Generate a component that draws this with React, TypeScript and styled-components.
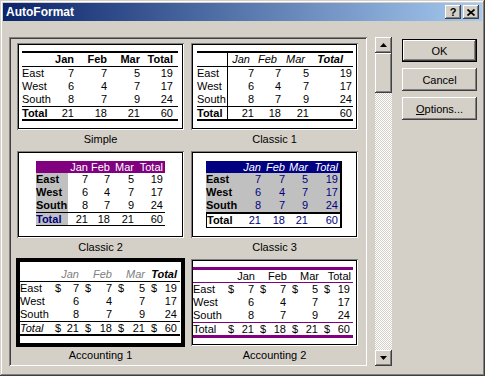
import styled, { createGlobalStyle, css } from "styled-components";

const FACE = "#d4d0c8";
const PURPLE = "#800080";
const NAVY = "#000080";
const SILVER = "#c0c0c0";

const GlobalStyle = createGlobalStyle`
  html, body {
    margin: 0;
    padding: 0;
    background: ${FACE};
  }
  body {
    font-family: "Liberation Sans", Arial, sans-serif;
    font-size: 11px;
    color: #000;
  }
`;

const raised = css`
  background: ${FACE};
  box-shadow: inset -1px -1px #404040, inset 1px 1px #fff,
    inset -2px -2px #808080, inset 2px 2px ${FACE};
`;

const Window = styled.div`
  width: 485px;
  height: 376px;
  box-sizing: border-box;
  padding: 3px;
  background: ${FACE};
  box-shadow: inset -1px -1px #404040, inset 1px 1px ${FACE},
    inset -2px -2px #808080, inset 2px 2px #fff;
  display: flex;
  flex-direction: column;
`;

const TitleBar = styled.div`
  height: 18px;
  display: flex;
  align-items: center;
  padding: 0 3px 0 3px;
  background: linear-gradient(to right, #0a246a, #a6caf0);
  color: #fff;
  font-weight: bold;
  font-size: 12px;
`;

const TitleButtons = styled.div`
  margin-left: auto;
  display: flex;
  gap: 2px;
`;

const CaptionButton = styled.div`
  width: 16px;
  height: 14px;
  ${raised};
  display: flex;
  align-items: center;
  justify-content: center;
  color: #000;
  font-weight: bold;
  font-size: 11px;
  line-height: 14px;
`;

const Body = styled.div`
  display: flex;
  padding: 16px 0 0 6px;
`;

const Gallery = styled.div`
  width: 358px;
  height: 329px;
  box-sizing: border-box;
  overflow: hidden;
  box-shadow: inset 1px 1px #808080, inset -1px -1px #fff,
    inset 2px 2px #404040, inset -2px -2px ${FACE};
  padding: 6px 0 0 8px;
  display: grid;
  grid-template-columns: repeat(2, 167px);
  column-gap: 7px;
  row-gap: 3px;
  align-content: start;
`;

const Cell = styled.div`
  display: flex;
  flex-direction: column;
`;

const Frame = styled.div<{ $pt: number; $pl: number; $selected?: boolean }>`
  width: 167px;
  height: 87px;
  box-sizing: border-box;
  background: #fff;
  overflow: hidden;
  padding: ${(p) => p.$pt}px 0 0 ${(p) => p.$pl}px;
  box-shadow: ${(p) =>
    p.$selected
      ? "0 0 0 1px #000, inset 0 0 0 3px #000"
      : "inset 1px 1px #808080, inset -1px -1px #fff, inset 2px 2px #000, inset -2px -2px #000"};
`;

const Caption = styled.div`
  height: 18px;
  line-height: 18px;
  text-align: center;
`;

const PTable = styled.div<{ $right?: string }>`
  width: max-content;
  font-size: 11px;
  border-right: ${(p) => p.$right ?? "none"};
`;

const Row = styled.div<{
  $cols: string;
  $h: number;
  $bg?: string;
  $top?: string;
  $bottom?: string;
  $edge?: boolean;
}>`
  display: grid;
  grid-template-columns: ${(p) => p.$cols};
  height: ${(p) => p.$h}px;
  line-height: ${(p) => p.$h}px;
  background: ${(p) => p.$bg ?? "transparent"};
  border-top: ${(p) => p.$top ?? "none"};
  border-bottom: ${(p) => p.$bottom ?? "none"};
  box-shadow: ${(p) => (p.$edge ? "inset 1px 0 0 #000" : "none")};
`;

const Td = styled.div<{
  $right?: boolean;
  $pr?: number;
  $pl?: number;
  $bold?: boolean;
  $italic?: boolean;
  $color?: string;
  $bg?: string;
  $sep?: boolean;
}>`
  box-sizing: border-box;
  white-space: nowrap;
  text-align: ${(p) => (p.$right ? "right" : "left")};
  padding: 0 ${(p) => p.$pr ?? 0}px 0 ${(p) => p.$pl ?? 0}px;
  font-weight: ${(p) => (p.$bold ? "bold" : "normal")};
  font-style: ${(p) => (p.$italic ? "italic" : "normal")};
  color: ${(p) => p.$color ?? "inherit"};
  background: ${(p) => p.$bg ?? "transparent"};
  border-right: ${(p) => (p.$sep ? "1px solid #000" : "none")};
`;

const Money = styled.div`
  display: flex;
  justify-content: space-between;
  padding: 0 3px;
  white-space: nowrap;
`;

const Side = styled.div`
  margin-left: 8px;
  width: 17px;
  height: 329px;
  display: flex;
  flex-direction: column;
`;

const ArrowButton = styled.div`
  height: 16px;
  ${raised};
  display: flex;
  align-items: center;
  justify-content: center;
`;

const Thumb = styled.div`
  height: 40px;
  ${raised};
`;

const Track = styled.div`
  flex: 1;
  background-image: repeating-conic-gradient(#fff 0 25%, ${FACE} 0 50%);
  background-size: 2px 2px;
`;

const Buttons = styled.div`
  margin: 2px 0 0 10px;
  display: flex;
  flex-direction: column;
  gap: 6px;
`;

const Button = styled.button<{ $default?: boolean }>`
  width: 75px;
  height: 23px;
  border: none;
  padding: 0;
  font-family: "Liberation Sans", Arial, sans-serif;
  font-size: 11px;
  color: #000;
  ${raised};
  ${(p) =>
    p.$default &&
    css`
      box-shadow: inset 0 0 0 1px #000, inset -2px -2px #404040,
        inset 2px 2px #fff, inset -3px -3px #808080;
    `}
`;

const DATA: [string, number, number, number, number][] = [
  ["East", 7, 7, 5, 19],
  ["West", 6, 4, 7, 17],
  ["South", 8, 7, 9, 24],
];
const TOTALS = [21, 18, 21, 60];
const MONTHS = ["Jan", "Feb", "Mar"];

function Simple() {
  const cols = "24px 33px 33px 33px 33px";
  return (
    <PTable>
      <Row $cols={cols} $h={13} $top="2px solid #000" $bottom="1px solid #000">
        <Td />
        {[...MONTHS, "Total"].map((m) => (
          <Td key={m} $right $pr={5} $bold>
            {m}
          </Td>
        ))}
      </Row>
      {DATA.map(([label, ...nums]) => (
        <Row key={label} $cols={cols} $h={13}>
          <Td>{label}</Td>
          {nums.map((n, i) => (
            <Td key={i} $right $pr={5}>
              {n}
            </Td>
          ))}
        </Row>
      ))}
      <Row $cols={cols} $h={12} $top="1px solid #000" $bottom="2px solid #000">
        <Td $bold>Total</Td>
        {TOTALS.map((n, i) => (
          <Td key={i} $right $pr={5}>
            {n}
          </Td>
        ))}
      </Row>
    </PTable>
  );
}

function Classic1() {
  const cols = "31px 27px 27px 28px 43px";
  return (
    <PTable>
      <Row $cols={cols} $h={13} $top="2px solid #000" $bottom="1px solid #000">
        <Td $sep />
        {MONTHS.map((m) => (
          <Td key={m} $right $pr={5} $italic>
            {m}
          </Td>
        ))}
        <Td $right $pr={10} $italic $bold>
          Total
        </Td>
      </Row>
      {DATA.map(([label, ...nums]) => (
        <Row key={label} $cols={cols} $h={13}>
          <Td $sep>{label}</Td>
          {nums.map((n, i) => (
            <Td key={i} $right $pr={1}>
              {n}
            </Td>
          ))}
        </Row>
      ))}
      <Row $cols={cols} $h={12} $top="1px solid #000" $bottom="2px solid #000">
        <Td $sep $bold>
          Total
        </Td>
        {TOTALS.map((n, i) => (
          <Td key={i} $right $pr={1}>
            {n}
          </Td>
        ))}
      </Row>
    </PTable>
  );
}

function Classic2() {
  const cols = "32px 22px 22px 24px 29px";
  return (
    <PTable>
      <Row $cols={cols} $h={12} $bg={PURPLE}>
        <Td />
        {[...MONTHS, "Total"].map((m) => (
          <Td key={m} $right $pr={2} $color="#fff">
            {m}
          </Td>
        ))}
      </Row>
      {DATA.map(([label, ...nums]) => (
        <Row key={label} $cols={cols} $h={13}>
          <Td $bold $bg={SILVER}>
            {label}
          </Td>
          {nums.map((n, i) => (
            <Td key={i} $right $pr={2}>
              {n}
            </Td>
          ))}
        </Row>
      ))}
      <Row $cols={cols} $h={12} $top="1px solid #000" $bottom="1px solid #000">
        <Td $bold $bg={SILVER} $color={NAVY}>
          Total
        </Td>
        {TOTALS.map((n, i) => (
          <Td key={i} $right $pr={2}>
            {n}
          </Td>
        ))}
      </Row>
    </PTable>
  );
}

function Classic3() {
  const cols = "34px 23px 24px 23px 30px";
  return (
    <PTable $right="2px solid #000">
      <Row $cols={cols} $h={12} $bg={NAVY}>
        <Td />
        {[...MONTHS, "Total"].map((m) => (
          <Td key={m} $right $pr={2} $italic $color="#fff">
            {m}
          </Td>
        ))}
      </Row>
      {DATA.map(([label, ...nums]) => (
        <Row key={label} $cols={cols} $h={13} $bg={SILVER}>
          <Td $bold>{label}</Td>
          {nums.map((n, i) => (
            <Td key={i} $right $pr={2} $color={NAVY}>
              {n}
            </Td>
          ))}
        </Row>
      ))}
      <Row
        $cols={cols}
        $h={13}
        $bg="#fff"
        $top="2px solid #000"
        $bottom="1px solid #000"
        $edge
      >
        <Td $bold $pl={1}>
          Total
        </Td>
        {TOTALS.map((n, i) => (
          <Td key={i} $right $pr={2} $color={NAVY}>
            {n}
          </Td>
        ))}
      </Row>
    </PTable>
  );
}

function Accounting1() {
  const cols = "32px 30px 33px 33px 32px";
  return (
    <PTable>
      <Row $cols={cols} $h={13} $bottom="1px solid #000">
        <Td />
        {MONTHS.map((m) => (
          <Td key={m} $right $pr={3} $italic $color="#808080">
            {m}
          </Td>
        ))}
        <Td $right $pr={3} $italic $bold>
          Total
        </Td>
      </Row>
      {DATA.map(([label, ...nums], r) => (
        <Row key={label} $cols={cols} $h={13}>
          <Td>{label}</Td>
          {nums.map((n, i) =>
            r === 0 ? (
              <Money key={i}>
                <span>$</span>
                <span>{n}</span>
              </Money>
            ) : (
              <Td key={i} $right $pr={3}>
                {n}
              </Td>
            )
          )}
        </Row>
      ))}
      <Row $cols={cols} $h={12} $top="1px solid #000" $bottom="2px solid #000">
        <Td $italic>Total</Td>
        {TOTALS.map((n, i) => (
          <Money key={i}>
            <span>$</span>
            <span>{n}</span>
          </Money>
        ))}
      </Row>
    </PTable>
  );
}

function Accounting2() {
  const cols = "32px 32px 32px 32px 32px";
  const thin = `1px solid ${PURPLE}`;
  const thick = `3px solid ${PURPLE}`;
  return (
    <PTable>
      <Row $cols={cols} $h={12} $top={thick} $bottom={thin}>
        <Td />
        {[...MONTHS, "Total"].map((m) => (
          <Td key={m} $right $pr={2}>
            {m}
          </Td>
        ))}
      </Row>
      {DATA.map(([label, ...nums], r) => (
        <Row key={label} $cols={cols} $h={13}>
          <Td>{label}</Td>
          {nums.map((n, i) =>
            r === 0 ? (
              <Money key={i}>
                <span>$</span>
                <span>{n}</span>
              </Money>
            ) : (
              <Td key={i} $right $pr={3}>
                {n}
              </Td>
            )
          )}
        </Row>
      ))}
      <Row $cols={cols} $h={12} $top={thin} $bottom={thick}>
        <Td>Total</Td>
        {TOTALS.map((n, i) => (
          <Money key={i}>
            <span>$</span>
            <span>{n}</span>
          </Money>
        ))}
      </Row>
    </PTable>
  );
}

const Arrow = ({ down }: { down?: boolean }) => (
  <svg width="7" height="4" viewBox="0 0 7 4">
    <polygon points={down ? "0,0 7,0 3.5,4" : "0,4 7,4 3.5,0"} fill="#000" />
  </svg>
);

const FORMATS = [
  { name: "Simple", pt: 8, pl: 5, view: <Simple /> },
  { name: "Classic 1", pt: 8, pl: 6, view: <Classic1 /> },
  { name: "Classic 2", pt: 10, pl: 19, view: <Classic2 /> },
  { name: "Classic 3", pt: 10, pl: 15, view: <Classic3 /> },
  { name: "Accounting 1", pt: 9, pl: 3, view: <Accounting1 />, selected: true },
  { name: "Accounting 2", pt: 8, pl: 2, view: <Accounting2 /> },
];

export default function App() {
  return (
    <>
      <GlobalStyle />
      <Window>
        <TitleBar>
          AutoFormat
          <TitleButtons>
            <CaptionButton>?</CaptionButton>
            <CaptionButton>
              <svg width="8" height="7" viewBox="0 0 8 7">
                <path d="M0.5 0.5 L7.5 6.5 M7.5 0.5 L0.5 6.5" stroke="#000" strokeWidth="1.7" />
              </svg>
            </CaptionButton>
          </TitleButtons>
        </TitleBar>
        <Body>
          <Gallery>
            {FORMATS.map((f) => (
              <Cell key={f.name}>
                <Frame $pt={f.pt} $pl={f.pl} $selected={f.selected}>
                  {f.view}
                </Frame>
                <Caption>{f.name}</Caption>
              </Cell>
            ))}
          </Gallery>
          <Side>
            <ArrowButton>
              <Arrow />
            </ArrowButton>
            <Thumb />
            <Track />
            <ArrowButton>
              <Arrow down />
            </ArrowButton>
          </Side>
          <Buttons>
            <Button $default>OK</Button>
            <Button>Cancel</Button>
            <Button>
              <u>O</u>ptions...
            </Button>
          </Buttons>
        </Body>
      </Window>
    </>
  );
}
